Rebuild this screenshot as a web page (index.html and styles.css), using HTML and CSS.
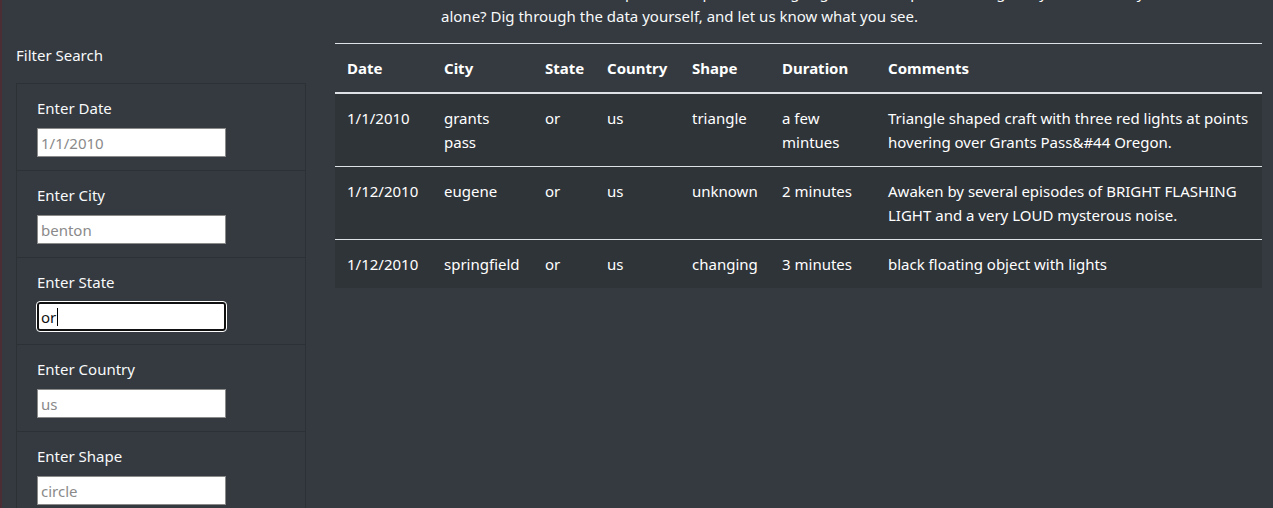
FILE: index.html
```html
<!DOCTYPE html>
<html lang="en">
<head>
<meta charset="utf-8">
<title>UFO Sightings</title>
<link rel="stylesheet" href="styles.css">
</head>
<body>
<div class="page">
  <p class="intro">The truth is out there! People have reported strange lights and shapes in the night sky. Are we really<br>alone? Dig through the data yourself, and let us know what you see.</p>
  <div class="layout">
    <aside class="sidebar">
      <div class="filter-title">Filter Search</div>
      <ul class="filters">
        <li class="filter">
          <label for="date">Enter Date</label>
          <input id="date" class="field" type="text" placeholder="1/1/2010">
        </li>
        <li class="filter">
          <label for="city">Enter City</label>
          <input id="city" class="field" type="text" placeholder="benton">
        </li>
        <li class="filter">
          <label for="state">Enter State</label>
          <span class="field-wrap">
            <input id="state" class="field focused" type="text" value="or">
            <span class="caret"></span>
          </span>
        </li>
        <li class="filter">
          <label for="country">Enter Country</label>
          <input id="country" class="field" type="text" placeholder="us">
        </li>
        <li class="filter">
          <label for="shape">Enter Shape</label>
          <input id="shape" class="field" type="text" placeholder="circle">
        </li>
      </ul>
    </aside>
    <main class="main">
      <table class="sightings">
        <colgroup>
          <col class="c-date"><col class="c-city"><col class="c-state"><col class="c-country"><col class="c-shape"><col class="c-duration"><col class="c-comments">
        </colgroup>
        <thead>
          <tr><th>Date</th><th>City</th><th>State</th><th>Country</th><th>Shape</th><th>Duration</th><th>Comments</th></tr>
        </thead>
        <tbody>
          <tr><td>1/1/2010</td><td>grants pass</td><td>or</td><td>us</td><td>triangle</td><td>a few mintues</td><td>Triangle shaped craft with three red lights at points hovering over Grants Pass&amp;#44 Oregon.</td></tr>
          <tr><td>1/12/2010</td><td>eugene</td><td>or</td><td>us</td><td>unknown</td><td>2 minutes</td><td>Awaken by several episodes of BRIGHT FLASHING LIGHT and a very LOUD mysterous noise.</td></tr>
          <tr><td>1/12/2010</td><td>springfield</td><td>or</td><td>us</td><td>changing</td><td>3 minutes</td><td>black floating object with lights</td></tr>
        </tbody>
      </table>
    </main>
  </div>
</div>
</body>
</html>
```
FILE: styles.css
```css
* { box-sizing: border-box; }
html, body { margin: 0; padding: 0; }
body {
  background: #343a40;
  color: #f8f9fa;
  font-family: "Noto Sans", "Open Sans", sans-serif;
  font-size: 15px;
  line-height: 24px;
  height: 508px;
  overflow: hidden;
  border-left: 2px solid #4a2d35;
}
.page { margin-top: -20px; }
.intro {
  margin: 0 0 15px 0;
  padding-left: 439px;
  height: 48px;
  white-space: nowrap;
}
.layout {
  display: grid;
  grid-template-columns: 290px 927px;
  column-gap: 29px;
  padding-left: 14px;
}
.filter-title {
  font-size: 15px;
  line-height: 24px;
  margin-bottom: 16px;
}
.filters {
  list-style: none;
  margin: 0;
  padding: 0;
  border: 1px solid #2c3136;
  border-bottom: none;
}
.filter {
  display: flex;
  flex-direction: column;
  align-items: flex-start;
  padding: 12px 20px 13px;
  border-bottom: 1px solid #2c3136;
}
.filter label {
  line-height: 24px;
  margin-bottom: 8px;
}
.field {
  width: 189px;
  height: 29px;
  border: 1px solid #8a8a8a;
  background: #fff;
  color: #111;
  font-family: "Noto Sans", "Open Sans", sans-serif;
  font-size: 15px;
  padding: 0 3px;
  margin: 0;
}
.field::placeholder { color: #8a8a8a; }
.field-wrap { position: relative; display: block; }
.field.focused {
  border: 2px solid #111;
  border-radius: 3px;
  outline: 1px solid #fff;
  padding: 0 2px;
}
.caret {
  position: absolute;
  left: 20px;
  top: 6px;
  width: 1px;
  height: 18px;
  background: #000;
}
.sightings {
  width: 927px;
  border-collapse: collapse;
  table-layout: fixed;
  color: #fff;
}
.c-date { width: 97px; }
.c-city { width: 101px; }
.c-state { width: 62px; }
.c-country { width: 85px; }
.c-shape { width: 90px; }
.c-duration { width: 106px; }
.c-comments { width: 386px; }
.sightings th, .sightings td {
  text-align: left;
  vertical-align: top;
  padding: 12px;
  line-height: 24px;
}
.sightings th {
  font-weight: 700;
  border-top: 1px solid #dee2e6;
  border-bottom: 2px solid #dee2e6;
}
.sightings tbody tr { background: #2f3439; }
.sightings tbody tr + tr td { border-top: 1px solid #dee2e6; }
```
